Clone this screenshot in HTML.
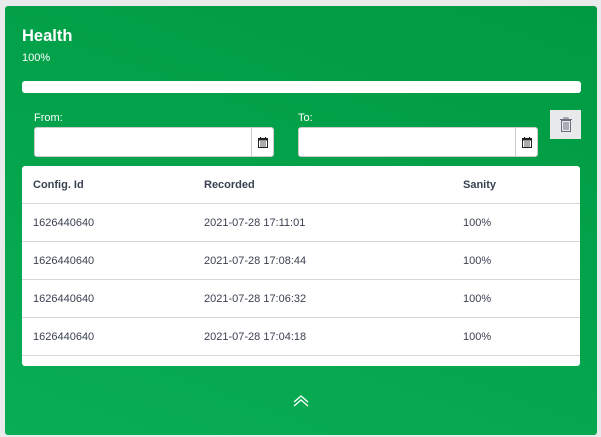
<!DOCTYPE html>
<html><head><style>
body{margin:0;width:601px;height:437px;background:#e9eaec;font-family:"Liberation Sans",sans-serif;overflow:hidden;position:relative}
.card{position:absolute;left:5px;top:6px;width:592px;height:429px;border-radius:3px;background:linear-gradient(20deg,#08ad55 0%,#009a42 100%)}
.t{position:absolute;left:17px;top:21px;color:#fff;font-size:16.5px;font-weight:bold}
.p{position:absolute;left:17px;top:46px;color:#fff;font-size:11px}
.bar{position:absolute;left:17px;top:75px;width:559px;height:12px;background:#fff;border-radius:3px}
.lbl{position:absolute;color:#fff;font-size:11px;top:106px}
.in{position:absolute;top:121px;height:30px;width:240px;background:#fff;border:1px solid #ccc;border-radius:3px;box-sizing:border-box}
.in .b{position:absolute;right:0;top:0;bottom:0;width:21px;border-left:1px solid #ccc;display:flex;align-items:center;justify-content:center}
.del{position:absolute;left:545px;top:104px;width:31px;height:29px;background:#e8e9eb;display:flex;align-items:center;justify-content:center}
.tbl{position:absolute;left:17px;top:160px;width:558px;height:200px;background:#fff;border-radius:3px;overflow:hidden}
.r{height:37px;border-bottom:1px solid #d3d6da;position:relative;font-size:11px;color:#3b4151}
.r span{position:absolute;top:13px}
.h{font-weight:bold;color:#3a4252}
</style></head><body>
<div class="card">
<div class="t">Health</div><div class="p">100%</div>
<div class="bar"></div>
<div class="lbl" style="left:29px">From:</div>
<div class="lbl" style="left:293px">To:</div>
<div class="in" style="left:29px"><div class="b"><svg width="10" height="11" viewBox="0 0 10 11"><rect x="0.5" y="1.5" width="9" height="9" fill="none" stroke="#222"/><rect x="0.5" y="1.5" width="9" height="2" fill="#222"/><rect x="2" y="0" width="1" height="2" fill="#222"/><rect x="7" y="0" width="1" height="2" fill="#222"/><path d="M2 5h6M2 7h6M2 9h6" stroke="#222" stroke-width="0.8"/></svg></div></div>
<div class="in" style="left:293px"><div class="b"><svg width="10" height="11" viewBox="0 0 10 11"><rect x="0.5" y="1.5" width="9" height="9" fill="none" stroke="#222"/><rect x="0.5" y="1.5" width="9" height="2" fill="#222"/><rect x="2" y="0" width="1" height="2" fill="#222"/><rect x="7" y="0" width="1" height="2" fill="#222"/><path d="M2 5h6M2 7h6M2 9h6" stroke="#222" stroke-width="0.8"/></svg></div></div>
<div class="del"><svg width="12" height="15" viewBox="0 0 12 15"><path d="M0 2.5h12M4 2.5V1h4v1.5" stroke="#6b7080" fill="none"/><rect x="1.5" y="3.5" width="9" height="11" fill="none" stroke="#6b7080"/><path d="M4 5v8M6 5v8M8 5v8" stroke="#6b7080"/></svg></div>
<div class="tbl">
<div class="r h"><span style="left:11px">Config. Id</span><span style="left:182px">Recorded</span><span style="left:441px">Sanity</span></div>
<div class="r"><span style="left:11px">1626440640</span><span style="left:182px">2021-07-28 17:11:01</span><span style="left:441px">100%</span></div>
<div class="r"><span style="left:11px">1626440640</span><span style="left:182px">2021-07-28 17:08:44</span><span style="left:441px">100%</span></div>
<div class="r"><span style="left:11px">1626440640</span><span style="left:182px">2021-07-28 17:06:32</span><span style="left:441px">100%</span></div>
<div class="r"><span style="left:11px">1626440640</span><span style="left:182px">2021-07-28 17:04:18</span><span style="left:441px">100%</span></div>
</div>
<svg style="position:absolute;left:288px;top:389px" width="16" height="12" viewBox="0 0 16 12"><path d="M1 7l7-6 7 6M1 11l7-6 7 6" stroke="#fff" fill="none" stroke-width="1.3"/></svg>
</div>
</body></html>
